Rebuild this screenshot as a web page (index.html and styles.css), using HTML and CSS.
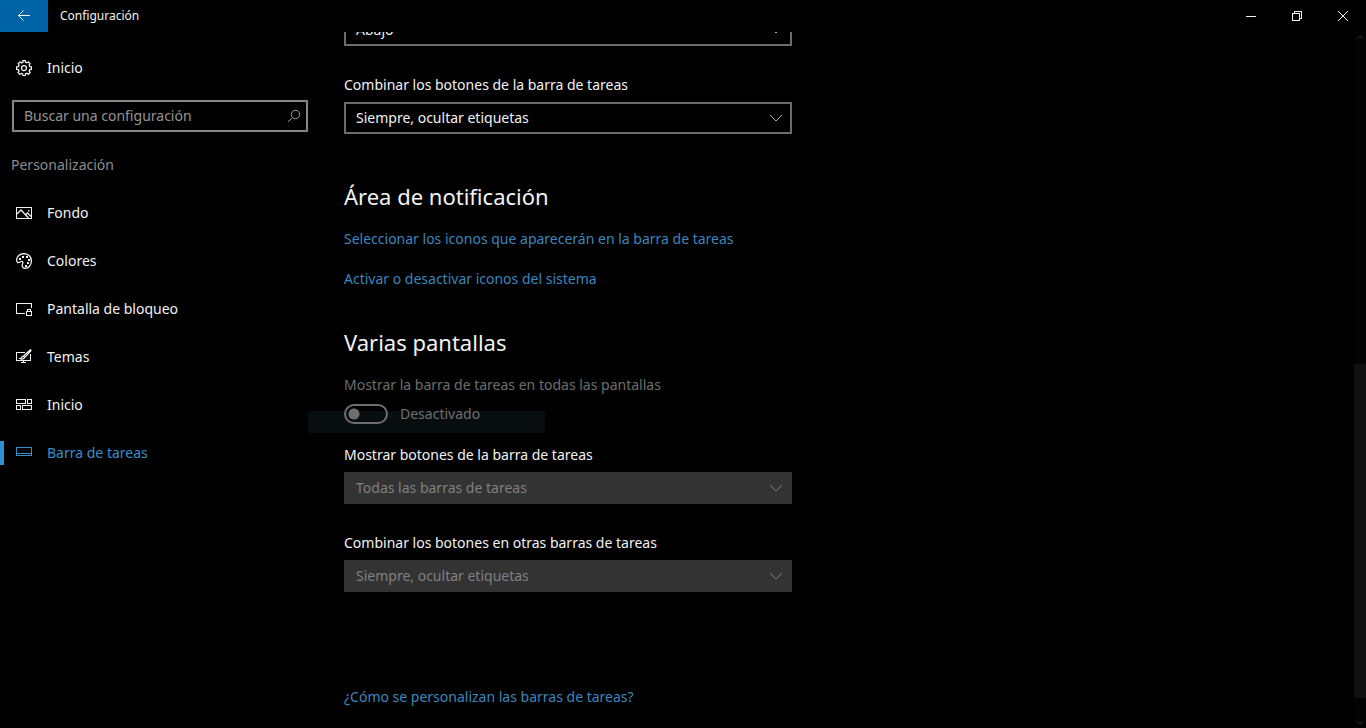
FILE: index.html
```html
<!DOCTYPE html>
<html lang="es">
<head>
<meta charset="utf-8">
<meta name="viewport" content="width=device-width, initial-scale=1">
<title>Configuración</title>
<link rel="stylesheet" href="styles.css">
</head>
<body>
<div class="window">
  <header class="titlebar">
    <button class="back" type="button" aria-label="Atrás">
      <svg class="icon" viewBox="0 0 16 16"><path d="M14 7.500H2.500M7.500 2.500l-5 5 5 5"/></svg>
    </button>
    <h1 class="title">Configuración</h1>
    <div class="controls">
      <button class="control" type="button" aria-label="Minimizar">
        <svg class="icon crisp" viewBox="0 0 16 16"><path d="M3 8.500h10"/></svg>
      </button>
      <button class="control" type="button" aria-label="Restaurar">
        <svg class="icon crisp" viewBox="0 0 16 16"><path d="M3.500 5.500h7v7h-7zM5.500 5.500v-2h7v7h-2"/></svg>
      </button>
      <button class="control" type="button" aria-label="Cerrar">
        <svg class="icon" viewBox="0 0 16 16"><path d="M3 3l10 10M13 3L3 13"/></svg>
      </button>
    </div>
  </header>

  <div class="body">
    <aside class="sidebar">
      <a class="item" href="#inicio">
        <svg class="icon bold" viewBox="0 0 16 16"><circle cx="8" cy="8" r="2.500"/><path d="M6.800 0.600L7 2.200 5.500 2.900 4.100 1.800 2.200 3.700 3.100 5.300 2.500 6.600 0.600 6.900v2.600l1.800.2.600 1.400-1 1.400 1.900 1.900 1.400-1 1.400.6.200 1.500h2.400l.2-1.700 1.400-.6 1.400 1.100 1.900-1.900-1.100-1.400.6-1.300 1.700-.2V6.800l-1.700-.2-.6-1.400 1-1.400-1.800-1.900-1.500 1-1.300-.6-.2-1.700z"/></svg>
        <span>Inicio</span>
      </a>
      <div class="search">
        <input class="search-input" type="search" placeholder="Buscar una configuración" aria-label="Buscar una configuración">
        <svg class="icon" viewBox="0 0 16 16"><circle cx="9.500" cy="6.500" r="4.200"/><path d="M6.500 9.500L2 14"/></svg>
      </div>
      <h2 class="category">Personalización</h2>
      <nav aria-label="Personalización">
        <a class="item" href="#fondo">
          <svg class="icon" viewBox="0 0 16 16"><path class="crisp" d="M0.500 2.500h15v11H0.500z"/><path class="bold" d="M1 9l4-4 7.500 8M9.500 10l2-2L15 11.500"/><path class="dot" d="M12 5h1.400v1.400H12z"/></svg>
          <span>Fondo</span>
        </a>
        <a class="item" href="#colores">
          <svg class="icon bold" viewBox="0 0 16 16"><path d="M8 .6C4 .6.600 3.500.600 7c0 2.300 1.300 2.900 2.500 2.500C4.600 9 5 8 6 8.300c1.200.3 1 1.400.5 2.700-.7 1.700-.3 4.400 2.300 4.400 3.700 0 6.600-3.300 6.600-7.400C15.400 3.800 12.300.6 8 .6z"/><path class="dot" d="M3 5h2v2H3zM6 3h2v2H6zM10 3h2v2h-2zM12 6h2v2h-2zM11 9h2v2h-2zM9 12h2v2H9z"/></svg>
          <span>Colores</span>
        </a>
        <a class="item" href="#bloqueo">
          <svg class="icon crisp" viewBox="0 0 16 16"><path d="M9 12.500H0.500v-10h15V7M10.500 10.500h5v4h-5zM11.500 10.500v-2h3v2"/></svg>
          <span>Pantalla de bloqueo</span>
        </a>
        <a class="item" href="#temas">
          <svg class="icon" viewBox="0 0 16 16"><path class="crisp" d="M9 3.500H0.500v8h14V5M7.500 11.500v2M5 13.500h5"/><path class="bold" d="M14.500.8L7.500 7l1.300 1.400 6.200-6.700zM7.400 7.200c-1.700.1-1.700 2-3.300 2.500 1.800.8 4.300.3 4.400-1.400z"/></svg>
          <span>Temas</span>
        </a>
        <a class="item" href="#menu-inicio">
          <svg class="icon crisp" viewBox="0 0 16 16"><path d="M0.500 2.500h9v4h-9zM11.500 2.500h4v4h-4zM0.500 8.500h4v4h-4zM6.500 8.500h9v4h-9z"/></svg>
          <span>Inicio</span>
        </a>
        <a class="item current" href="#barra" aria-current="page">
          <svg class="icon crisp" viewBox="0 0 16 16"><path d="M0.500 2.500h15v8H0.500zM0.500 8.500h15"/></svg>
          <span>Barra de tareas</span>
        </a>
      </nav>
    </aside>

    <main class="content">
      <div class="field">
        <div class="combo">
          <select class="select" aria-label="Ubicación de la barra de tareas en la pantalla"><option>Abajo</option></select>
          <svg class="icon chevron" viewBox="0 0 16 16"><path d="M2 5l6 6 6-6"/></svg>
        </div>
      </div>
      <div class="field">
        <label class="label" for="combine">Combinar los botones de la barra de tareas</label>
        <div class="combo">
          <select class="select" id="combine"><option>Siempre, ocultar etiquetas</option></select>
          <svg class="icon chevron" viewBox="0 0 16 16"><path d="M2 5l6 6 6-6"/></svg>
        </div>
      </div>

      <section class="section">
        <h2 class="heading">Área de notificación</h2>
        <div class="links">
          <a class="link" href="#iconos">Seleccionar los iconos que aparecerán en la barra de tareas</a>
          <a class="link" href="#sistema">Activar o desactivar iconos del sistema</a>
        </div>
      </section>

      <section class="section displays">
        <h2 class="heading">Varias pantallas</h2>
        <div class="toggle-field">
          <label class="label muted" for="all-displays">Mostrar la barra de tareas en todas las pantallas</label>
          <div class="toggle-row">
            <input class="toggle" id="all-displays" type="checkbox" role="switch" disabled>
            <span class="muted">Desactivado</span>
          </div>
        </div>
        <div class="field">
          <label class="label" for="show-buttons">Mostrar botones de la barra de tareas</label>
          <div class="combo">
            <select class="select" id="show-buttons" disabled><option>Todas las barras de tareas</option></select>
            <svg class="icon chevron" viewBox="0 0 16 16"><path d="M2 5l6 6 6-6"/></svg>
          </div>
        </div>
        <div class="field">
          <label class="label" for="combine-other">Combinar los botones en otras barras de tareas</label>
          <div class="combo">
            <select class="select" id="combine-other" disabled><option>Siempre, ocultar etiquetas</option></select>
            <svg class="icon chevron" viewBox="0 0 16 16"><path d="M2 5l6 6 6-6"/></svg>
          </div>
        </div>
      </section>

      <a class="link help" href="#ayuda">¿Cómo se personalizan las barras de tareas?</a>
    </main>

    <div class="scrollbar" aria-hidden="true">
      <svg class="arrow" viewBox="0 0 12 12"><path d="M3 7l3-3 3 3"/></svg>
      <div class="thumb"></div>
      <svg class="arrow" viewBox="0 0 12 12"><path d="M3 5l3 3 3-3"/></svg>
    </div>
  </div>
</div>
</body>
</html>
```
FILE: styles.css
```css
* {
  box-sizing: border-box;
}

body {
  margin: 0;
  background: #000;
  color: #f2f2f2;
  font: 14px/20px "Segoe UI", "Noto Sans", "Open Sans", sans-serif;
}

button,
input,
select {
  font: inherit;
  color: inherit;
}

a {
  color: inherit;
  text-decoration: none;
}

h1,
h2 {
  margin: 0;
  font-weight: 400;
}

.window {
  display: flex;
  flex-direction: column;
  height: 100vh;
  overflow: hidden;
}

.icon {
  flex: none;
  width: 16px;
  height: 16px;
  fill: none;
  stroke: currentColor;
}

.bold {
  stroke-width: 1.25;
}

.crisp {
  shape-rendering: crispEdges;
}

.dot {
  fill: currentColor;
  stroke: none;
}

/* Title bar */
.titlebar {
  display: flex;
  align-items: center;
  flex: none;
  height: 32px;
}

.back,
.control {
  display: grid;
  place-items: center;
  height: 32px;
  padding: 0;
  border: 0;
  background: none;
}

.back {
  width: 48px;
  background: #0063a6;
}

.title {
  margin-left: 12px;
  font-size: 12px;
}

.controls {
  display: flex;
  margin-left: auto;
}

.control {
  width: 46px;
}

/* Sidebar */
.body {
  display: flex;
  flex: 1;
  min-height: 0;
}

.sidebar {
  flex: none;
  width: 308px;
  padding-top: 12px;
}

.item {
  display: flex;
  align-items: center;
  gap: 15px;
  height: 48px;
  padding-left: 16px;
}

.current {
  padding-left: 12px;
  color: #3a8fcb;
}

.current::before {
  content: "";
  width: 4px;
  height: 24px;
  margin: 0 -3px 0 -12px;
  background: #3190d4;
}

.search {
  display: flex;
  align-items: center;
  height: 32px;
  margin: 8px 0 9px 12px;
  padding: 0 4px 0 10px;
  border: 2px solid #868686;
  color: #9a9a9a;
}

.search-input {
  flex: 1;
  min-width: 0;
  padding: 0;
  border: 0;
  outline: 0;
  background: none;
}

.search-input::placeholder {
  color: #949494;
  opacity: 1;
}

.category {
  padding-left: 11px;
  color: #8c8c8c;
  font-size: 14px;
  line-height: 48px;
}

/* Content, resting at the end of its scroll range */
.content {
  display: flex;
  flex: 1;
  flex-direction: column;
  align-items: flex-start;
  justify-content: flex-end;
  min-width: 0;
  padding: 0 36px 21px;
  overflow: hidden;
}

.field {
  width: 100%;
  max-width: 448px;
}

.field + .field {
  margin-top: 29px;
}

.label {
  display: block;
}

.combo {
  display: grid;
  align-items: center;
  margin-top: 7px;
}

.select,
.chevron {
  grid-area: 1 / 1;
}

.select {
  width: 100%;
  height: 32px;
  padding: 0 32px 0 10px;
  border: 2px solid #6b6b6b;
  border-radius: 0;
  background: #000;
  appearance: none;
}

.select:disabled {
  border-color: #333;
  background: #333;
  color: #808080;
  opacity: 1;
}

.chevron {
  justify-self: end;
  margin-right: 8px;
  color: #b4b4b4;
  pointer-events: none;
}

.select:disabled + .chevron {
  color: #808080;
}

.section {
  width: 100%;
  margin-top: 46px;
}

.displays {
  margin-top: 37px;
}

.heading {
  margin-bottom: 17px;
  font-size: 22px;
  line-height: 32px;
}

.links {
  display: flex;
  flex-direction: column;
  align-items: flex-start;
  gap: 20px;
}

.link {
  color: #3b87bd;
}

.help {
  margin-top: 95px;
}

.muted {
  color: #6e6e6e;
}

.toggle-field {
  margin-bottom: 21px;
}

.toggle-row {
  position: relative;
  z-index: 0;
  display: flex;
  align-items: center;
  gap: 12px;
  margin-top: 9px;
}

.toggle-row::before {
  content: "";
  position: absolute;
  z-index: -1;
  top: 7px;
  left: -36px;
  width: 237px;
  height: 22px;
  background: #080d10;
}

.toggle {
  width: 44px;
  height: 20px;
  margin: 0;
  border: 2px solid #6e6e6e;
  border-radius: 10px;
  background: radial-gradient(circle at 8px 8px, #6e6e6e 5px, transparent 6px);
  appearance: none;
}

/* Scroll bar */
.scrollbar {
  display: flex;
  flex: none;
  flex-direction: column;
  width: 12px;
  background: #030303;
}

.thumb {
  height: 48%;
  margin: auto 0 18px;
  background: #101010;
}

.arrow {
  flex: none;
  width: 12px;
  height: 12px;
  fill: none;
  stroke: #2c2c2c;
}
```
